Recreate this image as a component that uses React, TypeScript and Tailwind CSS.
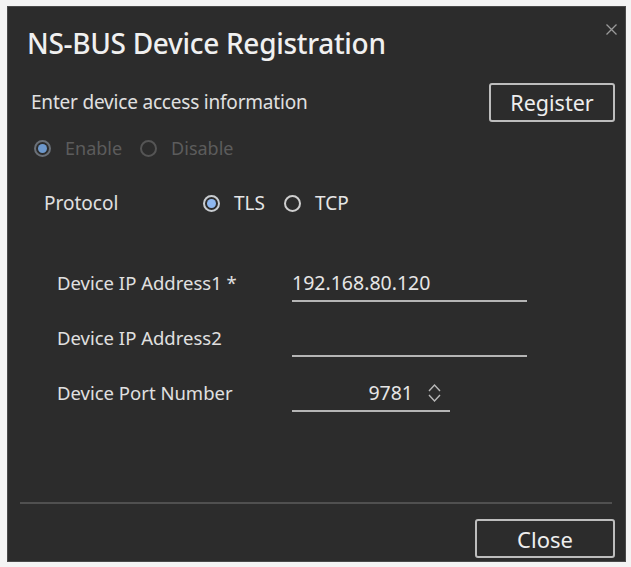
import { useState } from 'react'

const Radio = (props): JSX.Element => {
  const { checked, label, disabled, onClick } = props
  return (
    <button
      type="button"
      onClick={onClick}
      className={`flex items-center gap-[14px] ${disabled ? 'text-[#5c5c5c]' : 'text-[#e6e6e6]'}`}
    >
      <span
        className={`flex h-[17px] w-[17px] items-center justify-center rounded-full border-2 ${
          checked ? (disabled ? 'border-[#6a7078]' : 'border-[#c8ccd0]') : disabled ? 'border-[#555]' : 'border-[#cfcfcf]'
        }`}
      >
        {checked && (
          <span className={`h-[9px] w-[9px] rounded-full ${disabled ? 'bg-[#6d98cc]' : 'bg-[#8fb8f0]'}`} />
        )}
      </span>
      <span>{label}</span>
    </button>
  )
}

const Field = (props): JSX.Element => {
  const { label, children, narrow } = props
  return (
    <div className="flex items-start">
      <div className="w-[284px] pl-[49px] text-[18.5px] leading-[26px] text-[#e0e0e0]">{label}</div>
      <div
        className={`h-[32px] border-b-2 border-[#b5b5b5] text-[19.5px] leading-[26px] ${
          narrow ? 'w-[158px]' : 'w-[235px]'
        }`}
      >
        {children}
      </div>
    </div>
  )
}

const App = (): JSX.Element => {
  const [enabled, setEnabled] = useState(true)
  const [protocol, setProtocol] = useState('TLS')
  return (
    <div className="flex h-[567px] w-[631px] bg-[#f4f4f4] pb-[5px] pl-[7px] pr-[5px] pt-[6px] font-['Noto_Sans',sans-serif]">
      <div className="flex flex-1 flex-col border border-[#4a4a4a] bg-[#2c2c2c] text-[#e6e6e6]">
        <div className="flex items-start justify-between pl-[19px] pr-[8px] pt-[18px]">
          <h1 className="text-[28px] font-medium leading-[36px] tracking-[-0.3px] text-[#f0f0f0]">
            NS-BUS Device Registration
          </h1>
          <svg className="mt-[-1px]" width="11" height="11" viewBox="0 0 11 11" stroke="#9a9a9a" strokeWidth="1.3">
            <path d="M0.5 0.5 L10.5 10.5 M10.5 0.5 L0.5 10.5" />
          </svg>
        </div>

        <div className="mt-[22px] flex items-center justify-between pl-[23px] pr-[10px]">
          <span className="text-[19px] tracking-[-0.2px] text-[#e0e0e0]">Enter device access information</span>
          <button
            type="button"
            className="h-[39px] w-[126px] rounded-[3px] border-2 border-[#bdbdbd] text-[21.5px] leading-none text-[#eeeeee]"
          >
            Register
          </button>
        </div>

        <div className="mt-[13px] flex h-[26px] gap-[18px] pl-[26px] text-[18px]">
          <Radio checked={enabled} disabled label="Enable" onClick={() => setEnabled(true)} />
          <Radio checked={!enabled} disabled label="Disable" onClick={() => setEnabled(false)} />
        </div>

        <div className="mt-[29px] flex h-[26px] items-center pl-[36px] text-[19px]">
          <span className="w-[159px] text-[#e0e0e0]">Protocol</span>
          <div className="flex gap-[19px]">
            <Radio checked={protocol === 'TLS'} label="TLS" onClick={() => setProtocol('TLS')} />
            <Radio checked={protocol === 'TCP'} label="TCP" onClick={() => setProtocol('TCP')} />
          </div>
        </div>

        <div className="mt-[54px] flex flex-col gap-[23px]">
          <Field label="Device IP Address1 *">
            <span className="block text-[#e6e6e6]">192.168.80.120</span>
          </Field>
          <Field label="Device IP Address2" />
          <Field label="Device Port Number" narrow>
            <div className="flex items-center justify-end gap-[14px] pr-[8px]">
              <span className="text-[#e6e6e6]">9781</span>
              <svg width="15" height="22" viewBox="0 0 15 22" fill="none" stroke="#b8b8b8" strokeWidth="1.4">
                <path d="M2 9 L7.5 3 L13 9" />
                <path d="M2 13 L7.5 19 L13 13" />
              </svg>
            </div>
          </Field>
        </div>

        <div className="flex-1" />

        <div className="ml-[12px] mr-[13px] h-[2px] bg-[#505050]" />

        <div className="flex justify-end pb-[3px] pr-[10px] pt-[15px]">
          <button
            type="button"
            className="h-[39px] w-[140px] rounded-[3px] border-2 border-[#bdbdbd] text-[22px] leading-none text-[#eeeeee]"
          >
            Close
          </button>
        </div>
      </div>
    </div>
  )
}

export default App
